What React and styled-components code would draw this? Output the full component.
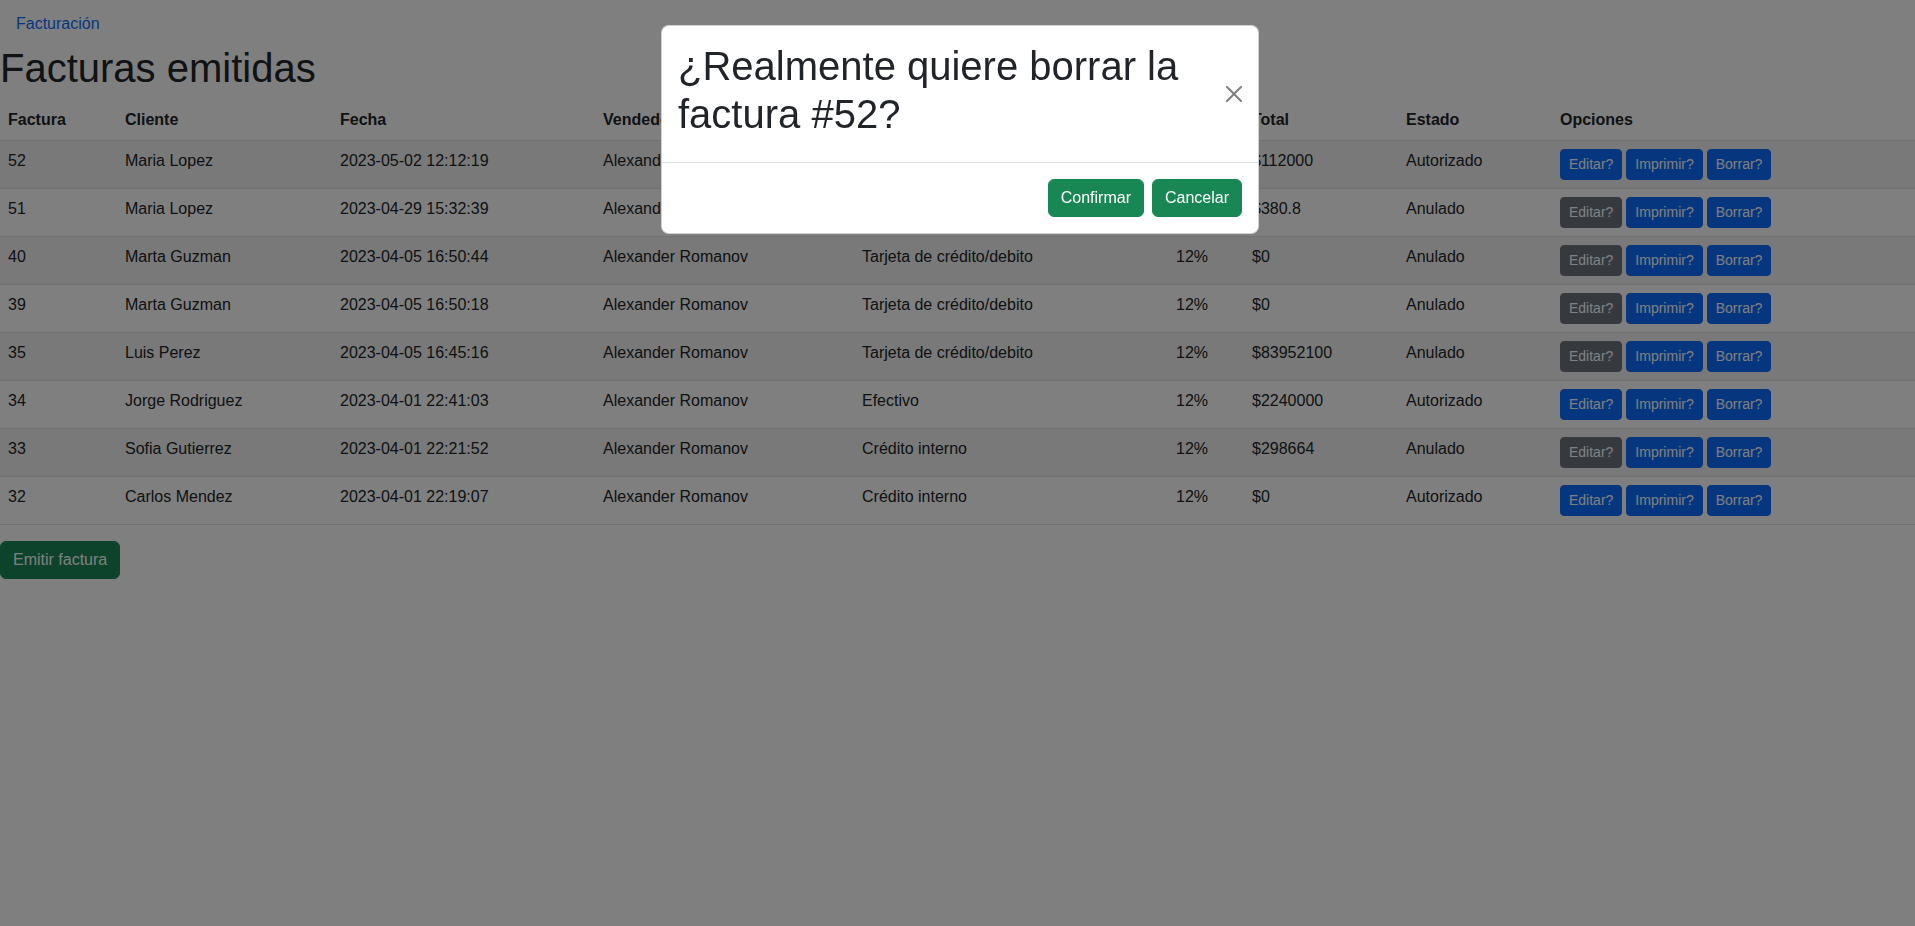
import React from "react";
import styled, { createGlobalStyle, css } from "styled-components";

const facturas = [
  { id: 52, cliente: "Maria Lopez", fecha: "2023-05-02 12:12:19", pago: "Efectivo", total: "$112000", estado: "Autorizado" },
  { id: 51, cliente: "Maria Lopez", fecha: "2023-04-29 15:32:39", pago: "Tarjeta de crédito/debito", total: "$380.8", estado: "Anulado" },
  { id: 40, cliente: "Marta Guzman", fecha: "2023-04-05 16:50:44", pago: "Tarjeta de crédito/debito", total: "$0", estado: "Anulado" },
  { id: 39, cliente: "Marta Guzman", fecha: "2023-04-05 16:50:18", pago: "Tarjeta de crédito/debito", total: "$0", estado: "Anulado" },
  { id: 35, cliente: "Luis Perez", fecha: "2023-04-05 16:45:16", pago: "Tarjeta de crédito/debito", total: "$83952100", estado: "Anulado" },
  { id: 34, cliente: "Jorge Rodriguez", fecha: "2023-04-01 22:41:03", pago: "Efectivo", total: "$2240000", estado: "Autorizado" },
  { id: 33, cliente: "Sofia Gutierrez", fecha: "2023-04-01 22:21:52", pago: "Crédito interno", total: "$298664", estado: "Anulado" },
  { id: 32, cliente: "Carlos Mendez", fecha: "2023-04-01 22:19:07", pago: "Crédito interno", total: "$0", estado: "Autorizado" },
];

const columnas = [
  { label: "Factura", w: 117 },
  { label: "Cliente", w: 215 },
  { label: "Fecha", w: 263 },
  { label: "Vendedor", w: 259 },
  { label: "Forma de pago", w: 314 },
  { label: "IVA", w: 76 },
  { label: "Total", w: 154 },
  { label: "Estado", w: 154 },
  { label: "Opciones", w: 363 },
];

const App = () => {
  return (
    <>
      <GlobalStyle />
      <Page>
        <TopNav>
          <NavLink href="#">Facturación</NavLink>
        </TopNav>
        <Title>Facturas emitidas</Title>
        <Table>
          <colgroup>
            {columnas.map((c) => (
              <Col key={c.label} $w={c.w} />
            ))}
          </colgroup>
          <thead>
            <tr>
              {columnas.map((c) => (
                <Th key={c.label}>{c.label}</Th>
              ))}
            </tr>
          </thead>
          <tbody>
            {facturas.map((f, i) => (
              <Row key={f.id} $striped={i % 2 === 0}>
                <Td>{f.id}</Td>
                <Td>{f.cliente}</Td>
                <Td>{f.fecha}</Td>
                <Td>Alexander Romanov</Td>
                <Td>{f.pago}</Td>
                <Td>12%</Td>
                <Td>{f.total}</Td>
                <Td>{f.estado}</Td>
                <Td>
                  <Options>
                    <SmallButton $variant={f.estado === "Anulado" ? "secondary" : "primary"}>
                      Editar?
                    </SmallButton>
                    <SmallButton $variant="primary">Imprimir?</SmallButton>
                    <SmallButton $variant="primary">Borrar?</SmallButton>
                  </Options>
                </Td>
              </Row>
            ))}
          </tbody>
        </Table>
        <Button>Emitir factura</Button>
      </Page>

      <Backdrop />
      <ModalLayer>
        <Dialog>
          <ModalHeader>
            <ModalTitle>¿Realmente quiere borrar la factura #52?</ModalTitle>
            <CloseButton aria-label="Close">
              <svg viewBox="0 0 16 16" width="16" height="16">
                <path
                  fill="#000"
                  d="M.293.293a1 1 0 0 1 1.414 0L8 6.586 14.293.293a1 1 0 1 1 1.414 1.414L9.414 8l6.293 6.293a1 1 0 0 1-1.414 1.414L8 9.414l-6.293 6.293a1 1 0 0 1-1.414-1.414L6.586 8 .293 1.707a1 1 0 0 1 0-1.414"
                />
              </svg>
            </CloseButton>
          </ModalHeader>
          <ModalFooter>
            <Button>Confirmar</Button>
            <Button>Cancelar</Button>
          </ModalFooter>
        </Dialog>
      </ModalLayer>
    </>
  );
};

const GlobalStyle = createGlobalStyle`
  *, *::before, *::after {
    box-sizing: border-box;
  }

  body {
    margin: 0;
    font-family: "Liberation Sans", Arial, sans-serif;
    font-size: 16px;
    line-height: 1.5;
    color: #212529;
    background-color: #fff;
  }
`;

const Page = styled.div`
  min-height: 100vh;
`;

const TopNav = styled.nav`
  display: flex;
  padding: 12px 16px 8px;
`;

const NavLink = styled.a`
  color: #0d6efd;
  text-decoration: none;
  line-height: 24px;
`;

const Title = styled.h1`
  margin: 0 0 8px;
  font-size: 40px;
  font-weight: 500;
  line-height: 1.2;
`;

const Table = styled.table`
  width: 100%;
  table-layout: fixed;
  border-collapse: collapse;
  margin-bottom: 16px;
  vertical-align: top;
`;

const Col = styled.col`
  width: ${(p) => p.$w}px;
`;

const Th = styled.th`
  text-align: left;
  font-weight: 700;
  padding: 8px;
  line-height: 24px;
  border-bottom: 1px solid #dee2e6;
  white-space: nowrap;
`;

const Row = styled.tr`
  background-color: ${(p) => (p.$striped ? "#f2f2f2" : "#fff")};
`;

const Td = styled.td`
  padding: 8px;
  line-height: 24px;
  vertical-align: top;
  border-bottom: 1px solid #dee2e6;
  white-space: nowrap;
`;

const Options = styled.div`
  display: flex;
  gap: 4px;
`;

const SmallButton = styled.button`
  font-family: inherit;
  font-size: 14px;
  line-height: 21px;
  padding: 4px 8px;
  border-radius: 4px;
  color: #fff;
  cursor: pointer;
  ${(p) =>
    p.$variant === "secondary"
      ? css`
          background-color: #6c757d;
          border: 1px solid #6c757d;
        `
      : css`
          background-color: #0d6efd;
          border: 1px solid #0d6efd;
        `}
`;

const Button = styled.button`
  font-family: inherit;
  font-size: 16px;
  line-height: 24px;
  padding: 6px 12px;
  border-radius: 6px;
  border: 1px solid #198754;
  background-color: #198754;
  color: #fff;
  cursor: pointer;
`;

const Backdrop = styled.div`
  position: fixed;
  inset: 0;
  background-color: rgba(0, 0, 0, 0.5);
`;

const ModalLayer = styled.div`
  position: fixed;
  inset: 0;
  display: flex;
  justify-content: center;
  align-items: flex-start;
  padding: 25px 0 0 5px;
`;

const Dialog = styled.div`
  width: 598px;
  background-color: #fff;
  border: 1px solid rgba(0, 0, 0, 0.175);
  border-radius: 8px;
  display: flex;
  flex-direction: column;
`;

const ModalHeader = styled.div`
  display: flex;
  align-items: center;
  padding: 16px;
  border-bottom: 1px solid #dee2e6;
`;

const ModalTitle = styled.h1`
  margin: 0 0 8px;
  font-size: 40px;
  font-weight: 500;
  line-height: 1.2;
`;

const CloseButton = styled.button`
  display: flex;
  align-items: center;
  justify-content: center;
  flex-shrink: 0;
  width: 32px;
  height: 32px;
  padding: 8px;
  margin: -8px -8px -8px auto;
  border: 0;
  background: transparent;
  opacity: 0.5;
  cursor: pointer;
`;

const ModalFooter = styled.div`
  display: flex;
  justify-content: flex-end;
  align-items: center;
  gap: 8px;
  padding: 16px 16px;
`;

export default App;
